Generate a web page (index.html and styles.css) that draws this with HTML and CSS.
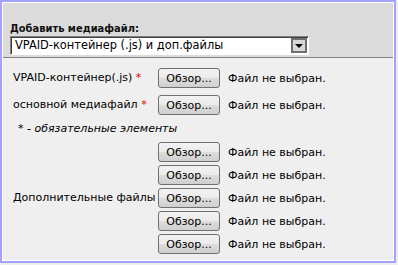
FILE: index.html
```html
<!DOCTYPE html>
<html lang="ru">
<head>
<meta charset="utf-8">
<link rel="stylesheet" href="styles.css">
</head>
<body>
<div class="box">
  <div class="head">
    <div class="title">Добавить медиафайл:</div>
    <div class="select">
      <span class="sel-text">VPAID-контейнер (.js) и доп.файлы</span>
      <span class="sel-btn"><span class="tri"></span></span>
    </div>
  </div>
  <div class="body">
    <div class="row">
      <div class="label">VPAID-контейнер(.js) <span class="req">*</span></div>
      <div class="file"><span class="btn">Обзор...</span><span class="status">Файл не выбран.</span></div>
    </div>
    <div class="row">
      <div class="label">основной медиафайл <span class="req">*</span></div>
      <div class="file"><span class="btn">Обзор...</span><span class="status">Файл не выбран.</span></div>
    </div>
    <div class="note">* - обязательные элементы</div>
    <div class="row extra">
      <div class="label">Дополнительные файлы</div>
      <div class="files">
        <div class="file"><span class="btn">Обзор...</span><span class="status">Файл не выбран.</span></div>
        <div class="file"><span class="btn">Обзор...</span><span class="status">Файл не выбран.</span></div>
        <div class="file"><span class="btn">Обзор...</span><span class="status">Файл не выбран.</span></div>
        <div class="file"><span class="btn">Обзор...</span><span class="status">Файл не выбран.</span></div>
        <div class="file"><span class="btn">Обзор...</span><span class="status">Файл не выбран.</span></div>
      </div>
    </div>
  </div>
</div>
</body>
</html>
```
FILE: styles.css
```css
html, body {
  margin: 0;
  padding: 0;
  background: #eeeeee;
}
body {
  font-family: "DejaVu Sans", Tahoma, sans-serif;
  font-size: 11px;
  color: #000;
}
.box {
  width: 390px;
  border: 2px solid #a3a3ff;
  padding: 1px;
  background: #ffffff;
}
.head {
  background: #dcdcdc;
  border-bottom: 1px solid #808080;
  padding: 19px 0 2px 7px;
}
.title {
  font-family: "DejaVu Sans Condensed", "DejaVu Sans", sans-serif;
  font-stretch: condensed;
  font-weight: bold;
  line-height: 14px;
  color: #111;
}
.select {
  display: flex;
  width: 299px;
  height: 19px;
  box-sizing: border-box;
  border-top: 1px solid #808080;
  border-left: 1px solid #808080;
  border-right: 1px solid #ffffff;
  border-bottom: 1px solid #ffffff;
  box-shadow: inset 1px 1px 0 #404040;
  background: #fff;
}
.sel-text {
  flex: 1;
  padding-left: 4px;
  line-height: 17px;
  font-size: 11.4px;
}
.sel-btn {
  width: 16px;
  margin: 1px 1px 1px 0;
  box-sizing: border-box;
  border: 2px solid #707070;
  background: #d8d8d8;
  display: flex;
  align-items: center;
  justify-content: center;
}
.tri {
  width: 0;
  height: 0;
  border-left: 4px solid transparent;
  border-right: 4px solid transparent;
  border-top: 4px solid #000;
}
.body {
  background: #efefef;
  padding: 10px 0 6px 10px;
}
.row {
  display: flex;
  align-items: center;
}
.row + .row {
  margin-top: 7px;
}
.label {
  width: 145px;
  line-height: 14px;
}
.req {
  color: #e00000;
}
.file {
  display: flex;
  align-items: center;
  height: 20px;
}
.files .file + .file {
  margin-top: 3px;
}
.btn {
  width: 62px;
  height: 20px;
  box-sizing: border-box;
  border: 1px solid #707070;
  border-radius: 3px;
  background: linear-gradient(#f2f2f2 0%, #ebebeb 50%, #dddddd 51%, #cfcfcf 100%);
  display: flex;
  align-items: center;
  justify-content: center;
  font-size: 11px;
}
.status {
  margin-left: 8px;
}
.note {
  font-style: italic;
  padding-left: 5px;
  line-height: 14px;
  margin: 7px 0 6px;
}
.extra {
  margin-top: 0;
}
```
